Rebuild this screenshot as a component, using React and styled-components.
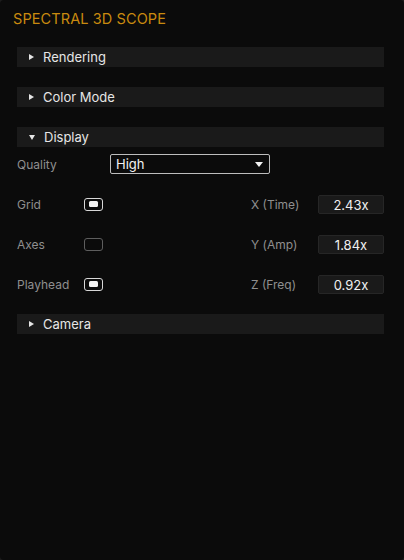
import React from "react";
import styled, { createGlobalStyle } from "styled-components";

const GlobalStyle = createGlobalStyle`
  html, body {
    margin: 0;
    padding: 0;
    background: #1c1c1c;
  }
  body {
    font-family: Inter, "Noto Sans", "Liberation Sans", sans-serif;
  }
`;

const Panel = styled.div`
  width: 404px;
  height: 560px;
  box-sizing: border-box;
  background: #0b0b0b;
  border-radius: 4px;
  padding: 10px 20px 0 17px;
  overflow: hidden;
`;

const Title = styled.h1`
  margin: 0 0 20px -4px;
  font-size: 14.5px;
  line-height: 17px;
  font-weight: 400;
  color: #c98a0f;
  letter-spacing: 0.1px;
`;

const Section = styled.section`
  margin-bottom: 20px;
`;

const Header = styled.div`
  height: 20px;
  display: flex;
  align-items: center;
  background: #1a1a1a;
  color: #e6e6e6;
  font-size: 13px;
  font-weight: 400;
`;

const Caret = styled.span`
  width: 0;
  height: 0;
  border-style: solid;
  ${({ $open }) =>
    $open
      ? `border-width: 5px 3px 0 3px;
         border-color: #e6e6e6 transparent transparent transparent;
         margin: 0 9px 0 12px;`
      : `border-width: 3px 0 3px 5px;
         border-color: transparent transparent transparent #e6e6e6;
         margin: 0 9px 0 12px;`}
`;

const Body = styled.div`
  padding-top: 7px;
  display: flex;
  flex-direction: column;
  gap: 20px;
`;

const Row = styled.div`
  height: 20px;
  display: flex;
  align-items: center;
`;

const Label = styled.span`
  width: ${({ $w }) => $w}px;
  flex: none;
  font-size: 12px;
  color: #8f8f8f;
`;

const Select = styled.div`
  width: 160px;
  height: 20px;
  box-sizing: border-box;
  border: 1px solid #bdbdbd;
  border-radius: 2px;
  display: flex;
  align-items: center;
  justify-content: space-between;
  padding: 0 6px 0 5px;
  color: #f2f2f2;
  font-size: 13px;
  font-weight: 400;
`;

const SelectArrow = styled.span`
  width: 0;
  height: 0;
  border-style: solid;
  border-width: 5px 4px 0 4px;
  border-color: #f2f2f2 transparent transparent transparent;
`;

const Check = styled.span`
  width: 19px;
  height: 13px;
  box-sizing: border-box;
  border-radius: 3px;
  border: 1px solid ${({ $on }) => ($on ? "#d8d8d8" : "#5e5e5e")};
  display: flex;
  align-items: center;
  justify-content: center;
  &::after {
    content: "";
    width: 9px;
    height: 6px;
    border-radius: 1.5px;
    background: ${({ $on }) => ($on ? "#f2f2f2" : "transparent")};
  }
`;

const Spacer = styled.div`
  flex: 1;
`;

const ScaleLabel = styled.span`
  width: 67px;
  font-size: 12px;
  color: #8f8f8f;
`;

const Value = styled.span`
  width: 66px;
  height: 19px;
  box-sizing: border-box;
  background: #1a1a1a;
  border: 1px solid #262626;
  border-radius: 2px;
  display: flex;
  align-items: center;
  justify-content: center;
  color: #f0f0f0;
  font-size: 13px;
  font-weight: 400;
  padding-top: 1px;
`;

const toggles = [
  { name: "Grid", on: true, axis: "X (Time)", value: "2.43x" },
  { name: "Axes", on: false, axis: "Y (Amp)", value: "1.84x" },
  { name: "Playhead", on: true, axis: "Z (Freq)", value: "0.92x" },
];

function SectionHeader({ title, open }) {
  return (
    <Header>
      <Caret $open={open} />
      {title}
    </Header>
  );
}

export default function App() {
  return (
    <>
      <GlobalStyle />
      <Panel>
        <Title>SPECTRAL 3D SCOPE</Title>
        <Section>
          <SectionHeader title="Rendering" />
        </Section>
        <Section>
          <SectionHeader title="Color Mode" />
        </Section>
        <Section>
          <SectionHeader title="Display" open />
          <Body>
            <Row>
              <Label $w={93}>Quality</Label>
              <Select>
                High
                <SelectArrow />
              </Select>
            </Row>
            {toggles.map((t) => (
              <Row key={t.name}>
                <Label $w={67}>{t.name}</Label>
                <Check $on={t.on} />
                <Spacer />
                <ScaleLabel>{t.axis}</ScaleLabel>
                <Value>{t.value}</Value>
              </Row>
            ))}
          </Body>
        </Section>
        <Section>
          <SectionHeader title="Camera" />
        </Section>
      </Panel>
    </>
  );
}
